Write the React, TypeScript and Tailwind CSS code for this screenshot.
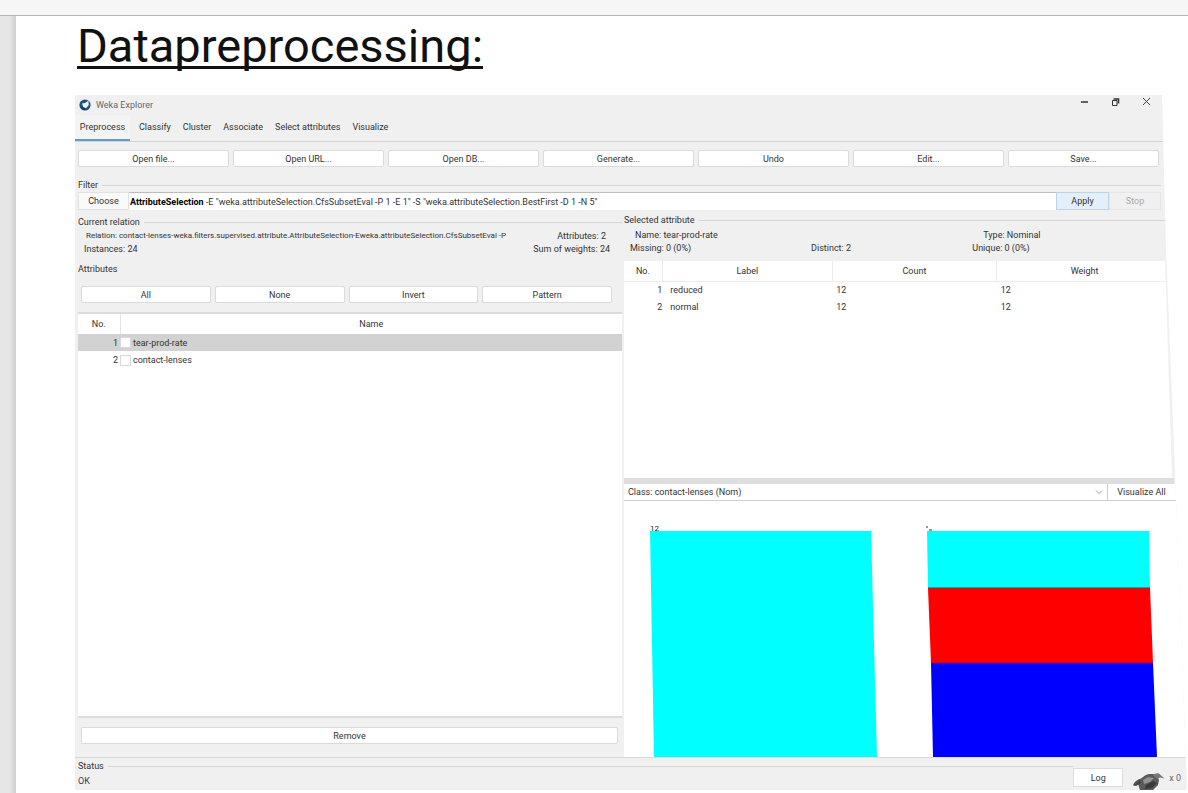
import React from "react";

const tabs = ["Classify", "Cluster", "Associate", "Select attributes", "Visualize"];
const actions = ["Open file...", "Open URL...", "Open DB...", "Generate...", "Undo", "Edit...", "Save..."];
const pickers = ["All", "None", "Invert", "Pattern"];
const attributes = ["tear-prod-rate", "contact-lenses"];
const labels = [
  { name: "reduced", count: 12, weight: 12 },
  { name: "normal", count: 12, weight: 12 },
];

function PushButton({ children, className = "" }: { children: React.ReactNode; className?: string }) {
  return (
    <button type="button" className={`h-[17px] rounded-[2px] border border-[#dadada] bg-white text-center ${className}`}>
      {children}
    </button>
  );
}

function GroupTitle({ children }: { children: React.ReactNode }) {
  return (
    <div className="flex h-3 items-center gap-1">
      <h2>{children}</h2>
      <span className="h-px flex-1 bg-[#d6d6d6]" />
    </div>
  );
}

function WekaLogo() {
  return (
    <svg viewBox="0 0 12 12" className="size-3" aria-hidden="true">
      <circle cx="6" cy="6" r="5.6" fill="#1f5088" />
      <path d="M3 4.400 6 4 9.400 1.800 9.800 6 7 9.200 4.400 8Z" fill="#eef5fb" />
      <path d="M1.2 7.6C2.4 10.4 5 11.4 7.6 10.8L5.6 9.4Z" fill="#12305c" />
    </svg>
  );
}

function Bird() {
  return (
    <svg viewBox="0 0 32 18" className="h-[18px] w-8" aria-hidden="true">
      <path d="M0 13C2 9 5 7 8 6.500L12 3.500C16 1.500 21 1.800 24 3.500L26 8 25 13 22 16 20 18H7L5 12 1 14Z" fill="#5a5a5a" />
      <path d="M20 3.500C22 1 26 .5 27.500 3L31.500 6.500 27 5.500 24 7Z" fill="#777" />
      <path d="M10 8 15 5 21 6 17 10 11 12Z" fill="#929292" />
      <path d="M13 13 20 9 24 11 19 16 12 17Z" fill="#3a3a3a" />
      <path d="M1 13 7 8 8 11 3 14Z" fill="#444" />
    </svg>
  );
}

function Histogram() {
  return (
    <svg viewBox="0 0 563 256" preserveAspectRatio="none" className="block h-64 w-full" role="img" aria-label="Class distribution">
      <polygon points="26,30 247,30 253,256 30,256" fill="#00ffff" />
      <polygon points="303,30 525,30 526,87 304,87" fill="#00ffff" />
      <polygon points="304,87 526,87 529,162 307,162" fill="#ff0000" />
      <polygon points="307,162 529,162 533,256 309,256" fill="#0000ff" />
      <path d="M304 87H526" stroke="#7a3030" strokeWidth="1" />
      <path d="M307 162H529" stroke="#8a0080" strokeWidth="1" />
      <text x="26" y="30" fontSize="8" fill="#222">12</text>
      <path d="M302 26h2M305 29h3" stroke="#333" strokeWidth="1" />
    </svg>
  );
}

export default function App() {
  return (
    <div className="flex min-h-screen flex-col bg-white font-['Roboto','Liberation_Sans',sans-serif] text-[9px] leading-3 text-[#333]">
      <div className="h-4 border-b border-[#b4b7b4] bg-[#f6f6f6]" />
      <div className="flex flex-1">
        <div className="w-4 bg-linear-to-r from-[#e6e6e6] from-60% to-[#cfcfcf]" />
        <main className="flex min-w-0 flex-1 flex-col pr-px pb-[3px] pl-[59px]">
          <h1 className="h-[79px] pt-0.5 pl-0.5 text-[47px] leading-[56px] text-[#111]">
            <span className="underline decoration-[3px] underline-offset-4 [text-decoration-skip-ink:none]">Datapreprocessing:</span>
          </h1>

          <section className="flex flex-1 flex-col bg-[#f0f0f0] [clip-path:polygon(0_0,calc(100%-25px)_0,calc(100%-21px)_22%,calc(100%-11px)_58%,100%_100%,0_100%)]">
            <header className="flex h-5 items-center pr-9 pl-1">
              <WekaLogo />
              <span className="ml-[5px] flex-1 text-[#666]">Weka Explorer</span>
              <div className="flex gap-[22px] pb-2">
                <button type="button" aria-label="Minimize">
                  <svg viewBox="0 0 9 9" className="size-[9px]"><path d="M1 5H8" stroke="#333" strokeWidth="1.5" /></svg>
                </button>
                <button type="button" aria-label="Restore">
                  <svg viewBox="0 0 9 9" className="size-[9px]" fill="none" stroke="#333"><path d="M1.500 3.500H6V8.500H1.500Z" /><path d="M2.500 2H7.500V6.500" strokeWidth="1.500" /></svg>
                </button>
                <button type="button" aria-label="Close">
                  <svg viewBox="0 0 9 9" className="size-[9px]"><path d="M1 1 8 8M8 1 1 8" stroke="#444" /></svg>
                </button>
              </div>
            </header>

            <nav className="flex h-[27px] items-stretch border-b border-[#d4d4d4]">
              <button type="button" className="w-[55px] border-b-2 border-[#5b9bd0] bg-[#f4f4f4] pb-px">Preprocess</button>
              <div className="flex gap-3 pb-0.5 pl-[9px]">
                {tabs.map((tab) => (
                  <button key={tab} type="button">{tab}</button>
                ))}
              </div>
            </nav>

            <div className="grid grid-cols-7 gap-1 pt-2 pr-7 pl-[3px]">
              {actions.map((action) => (
                <PushButton key={action}>{action}</PushButton>
              ))}
            </div>

            <div className="pt-3 pr-[26px] pl-[3px]">
              <GroupTitle>Filter</GroupTitle>
              <div className="mt-px flex h-[18px]">
                <button type="button" className="w-[51px] border border-[#e2e2e2] bg-[#fafafa]">Choose</button>
                <div className="min-w-0 flex-1 truncate border-t border-[#bdbdbd] bg-white pl-px leading-[18px]">
                  <b className="text-black">AttributeSelection</b>{" "}
                  -E "weka.attributeSelection.CfsSubsetEval -P 1 -E 1" -S "weka.attributeSelection.BestFirst -D 1 -N 5"
                </div>
                <button type="button" className="w-[53px] border border-[#bcd4e8] bg-[#e3effa]">Apply</button>
                <button type="button" disabled className="w-[52px] border border-[#e6e6e6] text-[#aaa]">Stop</button>
              </div>
            </div>

            <div className="grid flex-1 grid-cols-[547fr_565fr] pt-1">
              <div className="flex min-w-0 flex-col pt-0.5 pl-[3px]">
                <GroupTitle>Current relation</GroupTitle>
                <div className="mt-0.5 flex justify-between pr-4 pl-2 whitespace-nowrap">
                  <p className="min-w-0 truncate pr-3 text-[8px]">Relation: contact-lenses-weka.filters.supervised.attribute.AttributeSelection-Eweka.attributeSelection.CfsSubsetEval -P</p>
                  <p>Attributes: 2</p>
                </div>
                <div className="mt-px flex justify-between pr-3 pl-1.5">
                  <p>Instances: 24</p>
                  <p>Sum of weights: 24</p>
                </div>
                <div className="mt-2"><h2>Attributes</h2></div>
                <div className="mt-[11px] grid grid-cols-4 gap-1 pr-2.5 pl-[3px]">
                  {pickers.map((picker) => (
                    <PushButton key={picker}>{picker}</PushButton>
                  ))}
                </div>
                <div className="mt-[9px] flex-1 border-y-2 border-[#dcdcdc] bg-white">
                  <table className="w-full table-fixed border-collapse">
                    <thead>
                      <tr className="h-5">
                        <th className="w-[42px] border-r border-[#e5e5e5] font-normal">No.</th>
                        <th className="font-normal">Name</th>
                      </tr>
                    </thead>
                    <tbody>
                      {attributes.map((name, i) => (
                        <tr key={name} className={i === 0 ? "h-[17px] bg-[#d2d2d2]" : "h-[18px]"}>
                          <td className="pr-0.5 text-right">{i + 1}</td>
                          <td>
                            <label className="flex items-center gap-0.5">
                              <input type="checkbox" className="size-[11px] appearance-none border border-[#d8d8d8] bg-white" />
                              {name}
                            </label>
                          </td>
                        </tr>
                      ))}
                    </tbody>
                  </table>
                </div>
                <div className="flex pt-[9px] pr-1 pb-[13px] pl-[3px]">
                  <PushButton className="flex-1">Remove</PushButton>
                </div>
              </div>

              <div className="flex min-w-0 flex-col pl-0.5">
                <GroupTitle>Selected attribute</GroupTitle>
                <div className="mt-[3px] grid grid-cols-[183fr_163fr_217fr] pl-1.5">
                  <p className="pl-[5px]">Name: tear-prod-rate</p>
                  <span />
                  <p className="pl-[11px]">Type: Nominal</p>
                  <p className="pt-px">Missing: 0 (0%)</p>
                  <p className="pt-px">Distinct: 2</p>
                  <p className="pt-px">Unique: 0 (0%)</p>
                </div>
                <div className="mt-[7px] mr-[15px] flex-1 bg-white [clip-path:polygon(0_0,calc(100%-7px)_0,100%_100%,0_100%)]">
                  <table className="w-full table-fixed border-collapse">
                    <thead>
                      <tr className="h-5 border-b border-[#ececec]">
                        <th className="w-[7%] border-r border-[#ececec] font-normal">No.</th>
                        <th className="w-[31%] border-r border-[#ececec] font-normal">Label</th>
                        <th className="w-[30%] border-r border-[#ececec] font-normal">Count</th>
                        <th className="font-normal">Weight</th>
                      </tr>
                    </thead>
                    <tbody>
                      {labels.map((row, i) => (
                        <tr key={row.name} className="h-[17px]">
                          <td className="text-right">{i + 1}</td>
                          <td className="pl-2">{row.name}</td>
                          <td className="pl-1">{row.count}</td>
                          <td className="pl-1">{row.weight}</td>
                        </tr>
                      ))}
                    </tbody>
                  </table>
                </div>
                <div className="mr-[13px] h-1.5 bg-[#dedede]" />
                <div className="flex h-[17px] border-b border-[#cfcfcf] bg-white pr-3">
                  <div className="relative flex-1">
                    <select aria-label="Class" className="h-4 w-full appearance-none bg-white pl-1">
                      <option>Class: contact-lenses (Nom)</option>
                    </select>
                    <svg viewBox="0 0 8 8" className="pointer-events-none absolute top-1 right-1 size-2" fill="none" stroke="#999"><path d="M1 2.500 4 5.500 7 2.500" /></svg>
                  </div>
                  <button type="button" className="w-[68px] border-l border-[#cfcfcf]">Visualize All</button>
                </div>
                <div className="bg-white">
                  <Histogram />
                </div>
              </div>
            </div>

            <footer className="flex h-[33px] border-t border-[#d9d9d9] pl-[3px]">
              <div className="min-w-0 flex-1 pt-0.5">
                <GroupTitle>Status</GroupTitle>
                <p className="mt-[3px] text-[#33415e]">OK</p>
              </div>
              <button type="button" className="mt-2.5 h-[19px] w-[50px] self-start border border-[#dedede] bg-white">Log</button>
              <div className="flex items-start gap-1 pt-3.5 pr-1.5 pl-2.5">
                <Bird />
                <span className="text-[#666]">x 0</span>
              </div>
            </footer>
          </section>
        </main>
      </div>
    </div>
  );
}
